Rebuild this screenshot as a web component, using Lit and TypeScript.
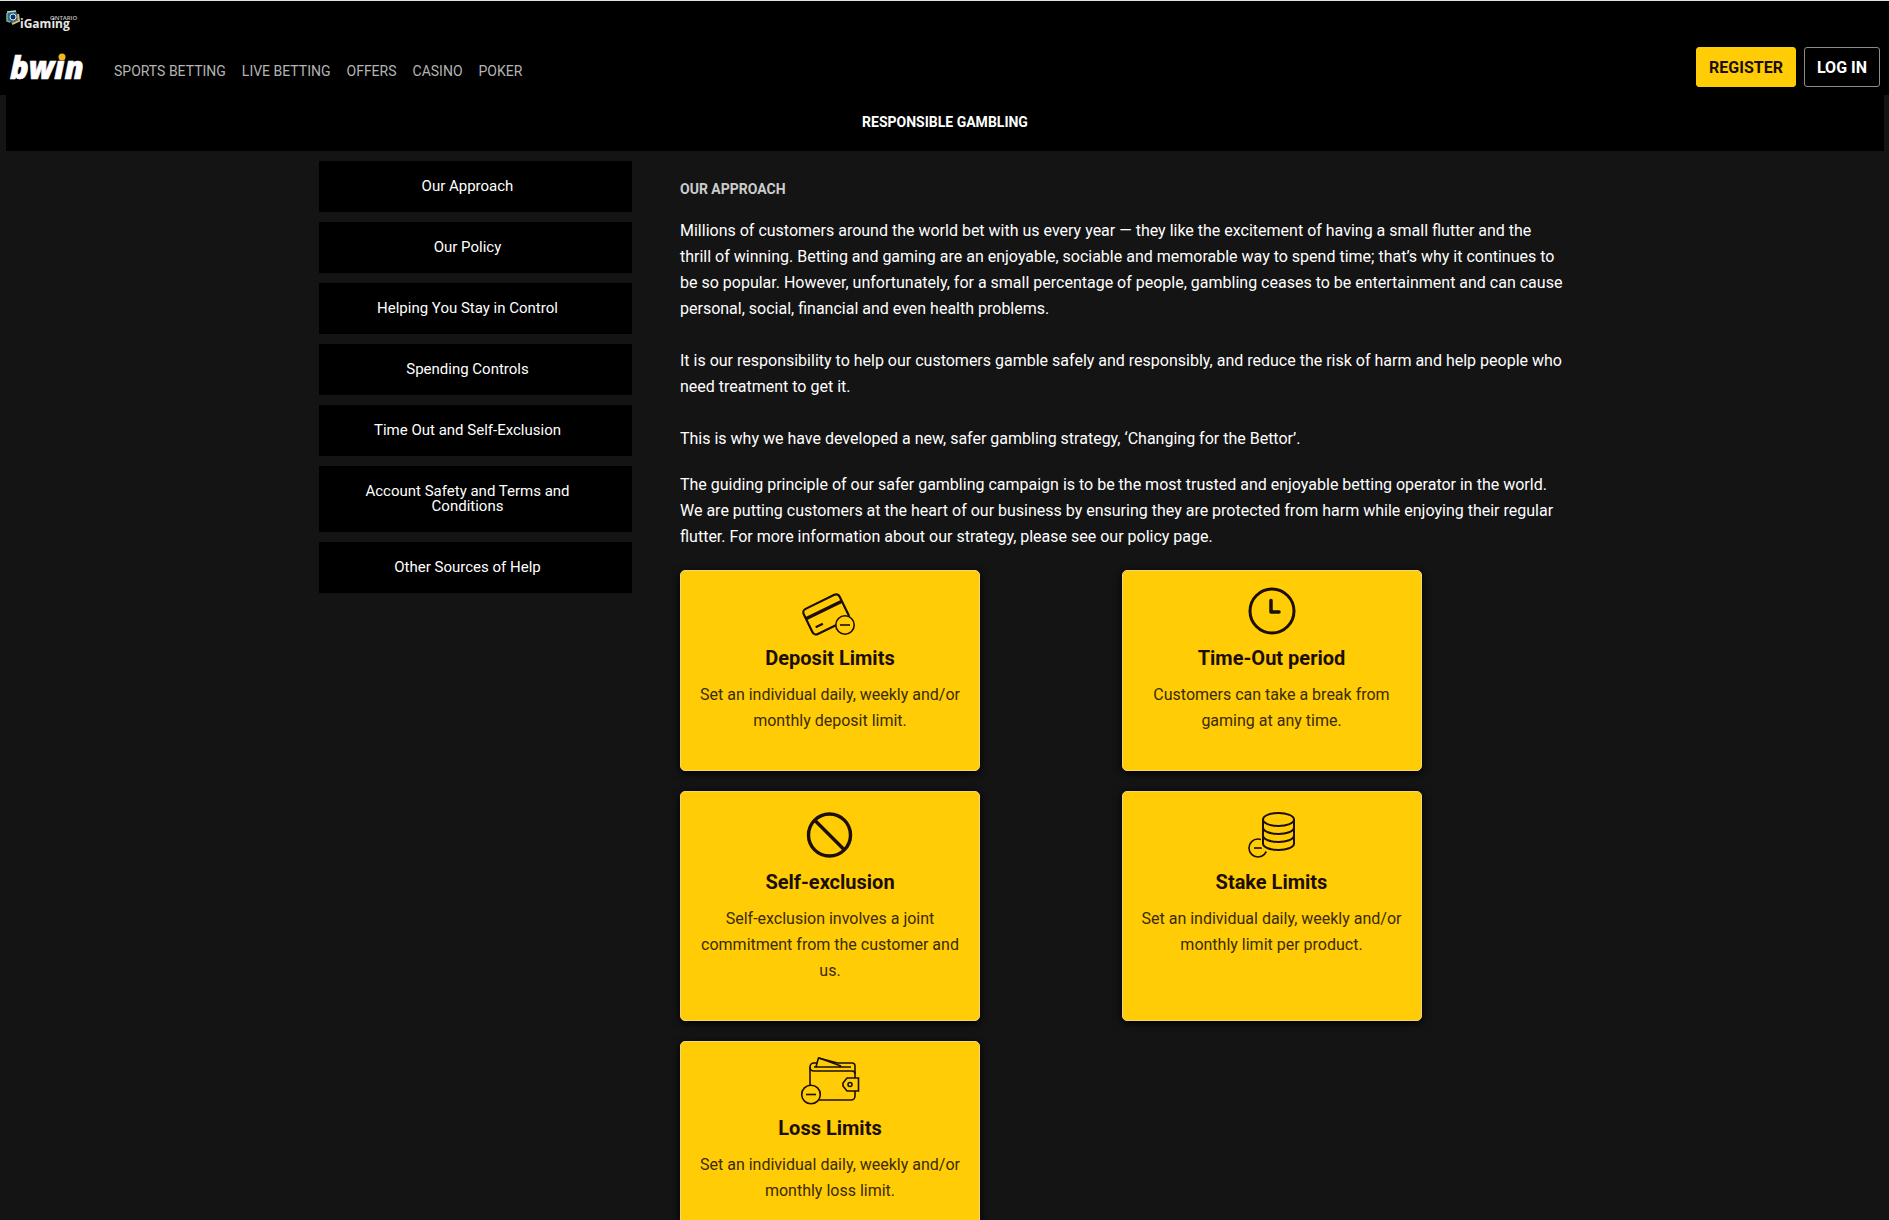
import { LitElement, html, css, svg } from "lit";
import { customElement } from "lit/decorators.js";

const ink = "#1c0e02";

const icons = {
  deposit: svg`
    <g transform="rotate(-26 27 23)" stroke-width="2.2">
      <rect x="6" y="9" width="40" height="28" rx="4"></rect>
      <path d="M6 18h40" stroke-width="3.4"></path>
      <path d="M11 30h8"></path>
    </g>
    <circle cx="45" cy="34" r="9.2" fill="#ffcc05" stroke-width="1.6"></circle>
    <path d="M40 34h10" stroke-width="1.6"></path>`,
  clock: svg`
    <circle cx="30" cy="20" r="22" stroke-width="3"></circle>
    <path d="M29 9.5v11.5h8" stroke-width="3.5" stroke-linecap="round" stroke-linejoin="round"></path>`,
  ban: svg`
    <circle cx="29.5" cy="23" r="21" stroke-width="3.4"></circle>
    <path d="M15 8.5l29 29" stroke-width="3.4"></path>`,
  stake: svg`
    <g stroke-width="1.6">
      <circle cx="16" cy="36" r="9"></circle>
      <path d="M12 36h8"></path>
    </g>
    <path d="M21 6v27c0 9 31 9 31 0V6z" fill="#ffcc05" stroke="#ffcc05" stroke-width="4"></path>
    <g stroke-width="2">
      <ellipse cx="36.5" cy="7.5" rx="15.5" ry="6.5"></ellipse>
      <path d="M21 7.500v24c0 8.500 31 8.500 31 0v-24M21 15.500c0 8.500 31 8.500 31 0M21 23.500c0 8.500 31 8.500 31 0"></path>
    </g>`,
  wallet: svg`
    <g stroke-width="1.6">
      <path d="M10 26V5a4 4 0 0 1 4-4h3l1.500-5 19 5H52a3 3 0 0 1 3 3v30a4 4 0 0 1-4 4H19"></path>
      <path d="M10 5c0 3 1 4 4 4h38a3 3 0 0 1 3 3M14 5h37M17 1l-1 4M19-4l22 8"></path>
      <path d="M58.500 16v13H47l-4-5v-3l4-5z" fill="#ffcc05"></path>
      <circle cx="50" cy="22.5" r="2"></circle>
      <circle cx="11" cy="32.5" r="9.3" fill="#ffcc05"></circle>
      <path d="M6 32.500h10"></path>
    </g>`,
};

interface Card {
  icon: keyof typeof icons;
  iconHeight: number;
  title: string;
  text: string;
}

const cards: Card[] = [
  { icon: "deposit", iconHeight: 46, title: "Deposit Limits", text: "Set an individual daily, weekly and/or monthly deposit limit." },
  { icon: "clock", iconHeight: 46, title: "Time-Out period", text: "Customers can take a break from gaming at any time." },
  { icon: "ban", iconHeight: 49, title: "Self-exclusion", text: "Self-exclusion involves a joint commitment from the customer and us." },
  { icon: "stake", iconHeight: 49, title: "Stake Limits", text: "Set an individual daily, weekly and/or monthly limit per product." },
  { icon: "wallet", iconHeight: 45, title: "Loss Limits", text: "Set an individual daily, weekly and/or monthly loss limit." },
];

const nav = ["SPORTS BETTING", "LIVE BETTING", "OFFERS", "CASINO", "POKER"];

const topics = [
  "Our Approach",
  "Our Policy",
  "Helping You Stay in Control",
  "Spending Controls",
  "Time Out and Self-Exclusion",
  "Account Safety and Terms and Conditions",
  "Other Sources of Help",
];

@customElement("app-root")
export class AppRoot extends LitElement {
  static styles = css`
    :host {
      display: block;
      min-height: 100vh;
      background: #141414;
      color: #fff;
      font: 16px/26px Roboto, "Liberation Sans", sans-serif;
    }
    * { box-sizing: border-box; }
    a { color: inherit; text-decoration: none; }
    h1, h2, h3, p { margin: 0; }
    .header {
      background: #000;
      border-top: 1px solid #dce5df;
    }
    .licence { display: flex; height: 38px; padding: 9px 6px 0; }
    .licence svg, .brand svg { display: block; }
    .bar { display: flex; align-items: center; padding: 0 9px; height: 56px; }
    .brand { width: 105px; }
    .nav { display: flex; gap: 16px; padding-top: 8px; font-size: 14px; color: #b4b4b4; }
    .actions { display: flex; gap: 8px; margin-left: auto; }
    button {
      height: 40px;
      padding: 2px 12px 0;
      border: 1px solid #8c8c8c;
      border-radius: 3px;
      background: #000;
      color: #fff;
      font: 700 16px/24px Roboto, "Liberation Sans", sans-serif;
    }
    .register { background: #ffcc05; border-color: #ffcc05; color: #1c0e02; }
    .title {
      display: flex;
      align-items: center;
      justify-content: center;
      height: 56px;
      margin: 0 5px 0 6px;
      padding-bottom: 2px;
      background: #000;
      font-size: 14px;
      font-weight: 700;
    }
    .page {
      display: grid;
      grid-template-columns: 313px minmax(0, 1fr);
      gap: 48px;
      max-width: 1251px;
      margin: 0 auto;
      padding: 10px 7px 0 0;
    }
    .topics { display: flex; flex-direction: column; gap: 10px; }
    .topic {
      padding: 18px 56px 18px 40px;
      background: #000;
      font-size: 15px;
      line-height: 15px;
      text-align: center;
    }
    .content { padding-top: 15px; }
    .heading { font-size: 14px; font-weight: 700; color: #ccc; margin-bottom: 16px; }
    .copy { margin-bottom: 26px; }
    .close { margin-bottom: 20px; }
    .cards {
      display: grid;
      grid-template-columns: 1fr 1fr;
      gap: 20px 0;
    }
    .card {
      width: 300px;
      min-height: 200px;
      padding: 20px 15px 36px;
      border: 1px solid #f0d878;
      border-radius: 5px;
      background: #ffcc05;
      color: #3c2a04;
      text-align: center;
      box-shadow: 0 2px 8px #000;
    }
    .card svg { display: block; margin: 0 auto 8px; overflow: visible; }
    .card h3 { margin-bottom: 11px; color: #1c0e02; font-size: 20px; font-weight: 700; }
  `;

  render() {
    return html`
      <header class="header">
        <div class="licence">
          <a href="#" aria-label="iGaming Ontario">
            <svg width="74" height="24" viewBox="0 0 74 24">
              <path d="M1 2l9-1 3 9-8 3-4-3z" fill="#2d6c88"></path>
              <path d="M1 2l9-1" stroke="#c9dcc5" stroke-width="1.5"></path>
              <path d="M1 3v8l3 1" fill="none" stroke="#7fb28b" stroke-width="1.5"></path>
              <path d="M12 4l1 7-7 3" fill="none" stroke="#e2b968" stroke-width="2"></path>
              <circle cx="7" cy="7" r="3" fill="#102e62" stroke="#d9eef6"></circle>
              <text x="14" y="18" fill="#e6e6e6" font-family="Open Sans, sans-serif" font-size="12" font-weight="700">iGaming</text>
              <text x="44" y="10" fill="#c4c4c4" font-family="Open Sans, sans-serif" font-size="6" font-weight="600">ONTARIO</text>
            </svg>
          </a>
        </div>
        <div class="bar">
          <a class="brand" href="#" aria-label="bwin">
            <svg width="76" height="46" viewBox="0 0 76 46">
              <text x="1" y="35" fill="#fff" stroke="#fff" stroke-width="0.6" font-family="Open Sans, sans-serif" font-size="31" font-weight="800" font-style="italic">bwın</text>
              <circle cx="53" cy="13" r="3.5" fill="#f5b81c"></circle>
            </svg>
          </a>
          <nav class="nav">${nav.map((n) => html`<a href="#">${n}</a>`)}</nav>
          <div class="actions">
            <button class="register">REGISTER</button>
            <button>LOG IN</button>
          </div>
        </div>
      </header>
      <h1 class="title">RESPONSIBLE GAMBLING</h1>
      <div class="page">
        <nav class="topics">${topics.map((t) => html`<a class="topic" href="#">${t}</a>`)}</nav>
        <main class="content">
          <h2 class="heading">OUR APPROACH</h2>
          <p class="copy">
            Millions of customers around the world bet with us every year — they like the excitement of having a small
            flutter and the thrill of winning. Betting and gaming are an enjoyable, sociable and memorable way to spend
            time; that’s why it continues to be so popular. However, unfortunately, for a small percentage of people,
            gambling ceases to be entertainment and can cause personal, social, financial and even health problems.
          </p>
          <p class="copy">
            It is our responsibility to help our customers gamble safely and responsibly, and reduce the risk of harm
            and help people who need treatment to get it.
          </p>
          <p class="copy close">
            This is why we have developed a new, safer gambling strategy, ‘Changing for the Bettor’.
          </p>
          <p class="copy close">
            The guiding principle of our safer gambling campaign is to be the most trusted and enjoyable betting
            operator in the world. We are putting customers at the heart of our business by ensuring they are protected
            from harm while enjoying their regular flutter. For more information about our strategy, please see our
            policy page.
          </p>
          <div class="cards">
            ${cards.map(
              (c) => html`
                <article class="card">
                  <svg width="60" height=${c.iconHeight} viewBox="0 0 60 ${c.iconHeight}" fill="none" stroke=${ink}>${icons[c.icon]}</svg>
                  <h3>${c.title}</h3>
                  <p>${c.text}</p>
                </article>
              `,
            )}
          </div>
        </main>
      </div>
    `;
  }
}
